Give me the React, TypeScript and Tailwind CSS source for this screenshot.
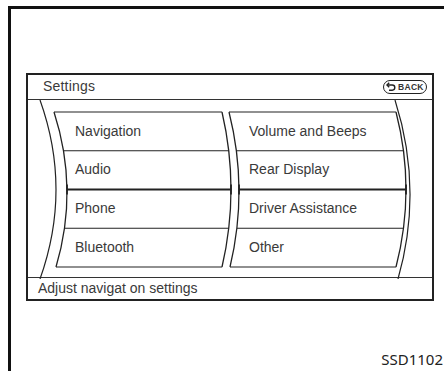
import React from "react";

// drum-style menu outlines: every edge is a ")" shaped quadratic curve
const Y0 = 12;
const Y2 = 167;

type Edge = [number, number, number]; // top x, middle x, bottom x

const ctrl = (e: Edge) => 2 * e[1] - (e[0] + e[2]) / 2;

const curve = (e: Edge, y0 = Y0, y2 = Y2) =>
  `M${e[0]} ${y0} Q${ctrl(e)} ${(y0 + y2) / 2} ${e[2]} ${y2}`;

const xAt = (e: Edge, y: number, y0 = Y0, y2 = Y2) => {
  const t = (y - y0) / (y2 - y0);
  return (1 - t) * (1 - t) * e[0] + 2 * t * (1 - t) * ctrl(e) + t * t * e[2];
};

const boxes: { l: Edge; r: Edge }[] = [
  { l: [26, 39, 28], r: [194, 203, 194] },
  { l: [201, 211, 202], r: [368, 378, 368] },
];

const rowLines = [Y0, 50.75, 128.25, Y2];
const mid = 89.5;

function Drum() {
  return (
    <svg
      className="absolute inset-0"
      width="404"
      height="179"
      viewBox="0 0 404 179"
      fill="none"
      stroke="#222"
    >
      <path d={curve([12, 28, 12], 0, 179)} strokeWidth="1.2" />
      <path d={curve([367, 382, 370], 0, 179)} strokeWidth="1.2" />
      {boxes.map((b, i) => (
        <g key={i}>
          <path d={curve(b.l)} strokeWidth="1.3" />
          <path d={curve(b.r)} strokeWidth="1.3" />
          {rowLines.map((y) => (
            <line
              key={y}
              x1={xAt(b.l, y)}
              x2={xAt(b.r, y)}
              y1={y}
              y2={y}
              strokeWidth="1.1"
            />
          ))}
          <line x1={xAt(b.l, mid)} x2={xAt(b.r, mid)} y1={mid} y2={mid} strokeWidth="2.2" />
          <line x1={b.l[1]} x2={b.l[1]} y1={mid - 5} y2={mid + 5} strokeWidth="1.8" />
          <line x1={b.r[1]} x2={b.r[1]} y1={mid - 5} y2={mid + 5} strokeWidth="1.8" />
        </g>
      ))}
    </svg>
  );
}

function BackButton() {
  return (
    <div className="flex items-center gap-[2px] h-[14px] w-[44px] border-[1.5px] border-[#222] rounded-full pl-[2px]">
      <svg width="10" height="9" viewBox="0 0 10 9" fill="none" stroke="#222" strokeWidth="1.4">
        <path d="M1 3h5.2a2.6 2.6 0 0 1 0 5.2H3" />
        <path d="M3.2 0.8 1 3l2.2 2.2" />
      </svg>
      <span className="text-[8.5px] leading-none font-bold tracking-[0.3px] text-[#333]">BACK</span>
    </div>
  );
}

const items = [
  "Navigation",
  "Audio",
  "Phone",
  "Bluetooth",
  "Volume and Beeps",
  "Rear Display",
  "Driver Assistance",
  "Other",
];

export default function App() {
  return (
    <div
      className="w-[444px] h-[371px] bg-white pt-[6px] pl-[8px] overflow-hidden"
      style={{ fontFamily: '"Liberation Sans", Arial, sans-serif' }}
    >
      <div className="h-full border-l-[3px] border-t-[3px] border-[#111] pl-[15px] pt-[64px] flex flex-col">
        <div className="w-[408px] h-[228px] border-2 border-[#222] flex flex-col">
          <div className="h-[25px] border-b border-[#333] flex items-center justify-between pl-[15px] pr-[5px]">
            <span className="text-[14px] text-[#3a3a3a] tracking-[0.2px]">Settings</span>
            <BackButton />
          </div>
          <div className="relative h-[179px]">
            <Drum />
            <div className="relative grid grid-flow-col grid-rows-4 grid-cols-[174px_1fr] pt-[12px] pl-[47px]">
              {items.map((it) => (
                <div key={it} className="h-[38.75px] flex items-center text-[14px] text-[#3a3a3a]">
                  {it}
                </div>
              ))}
            </div>
          </div>
          <div className="flex-1 border-t border-[#333] flex items-center pl-[10px]">
            <span className="text-[14px] text-[#3a3a3a]">Adjust navigat on settings</span>
          </div>
        </div>
        <div className="flex justify-end mt-[51px] pr-[1px]">
          <span
            className="text-[15px] text-[#222] leading-none"
            style={{ fontFamily: '"Noto Sans", "Open Sans", sans-serif' }}
          >
            SSD1102
          </span>
        </div>
      </div>
    </div>
  );
}
